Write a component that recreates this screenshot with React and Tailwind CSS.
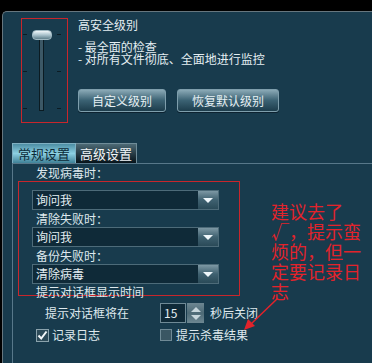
import React from 'react';

const font = { fontFamily: '"Noto Sans CJK SC", "Liberation Sans", sans-serif' };

const Dropdown = ({ value }) => (
  <div className="flex h-[20px] w-[187px] border border-[#4d6b79] bg-[#0f2a38]">
    <div className="flex-1 pl-[3px] text-[12px] leading-[18px] text-[#e4eef2]">{value}</div>
    <div className="flex w-[20px] items-center justify-center bg-gradient-to-b from-[#7d98a4] via-[#3f6170] to-[#2a4a58]">
      <div className="h-0 w-0 border-x-[5px] border-t-[5px] border-x-transparent border-t-[#eef6fa]"></div>
    </div>
  </div>
);

const GlassButton = ({ children, width }) => (
  <button className={`${width} h-[23px] rounded-[3px] border border-[#7e9eac] bg-gradient-to-b from-[#8aa9b6] via-[#3b6273] to-[#1d3d4c] text-[12px] leading-[20px] text-[#e6f0f4] shadow-[0_1px_0_#0c2230]`}>
    {children}
  </button>
);

export default function App() {
  return (
    <div className="h-[363px] w-[372px] overflow-hidden bg-black" style={font}>
      <div className="h-[11px]"></div>
      <div className="relative ml-[2px] h-[352px] rounded-tl-[5px] border-l border-t border-[#66767e] bg-[#183b4d]">
        {/* top: security level */}
        <div className="flex pl-[18px] pt-[6px]">
          <div className="relative h-[105px] w-[47px] border border-[#c8262c]">
            <div className="absolute left-[1px] top-[15px] h-px w-[4px] bg-[#0c1c24]"></div>
            <div className="absolute right-[6px] top-[15px] h-px w-[4px] bg-[#0c1c24]"></div>
            <div className="absolute left-[1px] top-[52px] h-px w-[4px] bg-[#0c1c24]"></div>
            <div className="absolute right-[6px] top-[52px] h-px w-[4px] bg-[#0c1c24]"></div>
            <div className="absolute left-[1px] top-[89px] h-px w-[4px] bg-[#0c1c24]"></div>
            <div className="absolute right-[6px] top-[89px] h-px w-[4px] bg-[#0c1c24]"></div>
            <div className="absolute left-[17px] top-[18px] h-[74px] w-[5px] border border-[#0b1b22] bg-[#3c5866]"></div>
            <div className="absolute left-[10px] top-[11px] h-[10px] w-[20px] rounded-[4px] border border-[#9fb8c2] bg-gradient-to-b from-[#f0f7fa] via-[#a9c2cc] to-[#5f7f8c]"></div>
          </div>
          <div className="ml-[10px] flex flex-col text-[12px] text-[#e4eef2]">
            <div className="mt-[-1px] leading-[16px]">高安全级别</div>
            <div className="mt-[8px] leading-[12px]">- 最全面的检查</div>
            <div className="leading-[12px]">- 对所有文件彻底、全面地进行监控</div>
            <div className="mt-[24px] flex gap-[11px]">
              <GlassButton width="w-[88px]">自定义级别</GlassButton>
              <GlassButton width="w-[102px]">恢复默认级别</GlassButton>
            </div>
          </div>
        </div>

        {/* tabs */}
        <div className="mt-[20px] flex pl-[9px]">
          <div className="h-[20px] w-[64px] border border-b-0 border-[#7fb0c2] bg-gradient-to-b from-[#4c8ea4] via-[#8cd0e2] to-[#3f8298] text-center text-[13px] leading-[19px] text-[#0b2a38]">常规设置</div>
          <div className="h-[20px] w-[61px] border-t border-r border-[#6f8c98] bg-gradient-to-b from-[#4d6a76] to-[#07141b] text-center text-[13px] leading-[19px] text-[#f2f6f8]">高级设置</div>
        </div>

        {/* general settings */}
        <div className="ml-[9px] h-[200px] border-l border-t border-[#58788a] pl-[5px]">
          <div className="ml-[18px] mt-[1px] text-[12px] leading-[16px] text-[#dfe9ee]">发现病毒时：</div>
          <div className="relative">
            <div className="w-[222px] border border-[#c8262c] pb-[2px] pl-[13px] pt-[8px]">
              <Dropdown value="询问我" />
              <div className="ml-[4px] mt-[1px] text-[12px] leading-[16px] text-[#dfe9ee]">清除失败时：</div>
              <Dropdown value="询问我" />
              <div className="ml-[4px] mt-[1px] text-[12px] leading-[16px] text-[#dfe9ee]">备份失败时：</div>
              <Dropdown value="清除病毒" />
              <div className="h-[9px]"></div>
            </div>
            <div className="absolute left-[18px] top-[103px] text-[12px] leading-[16px] text-[#dfe9ee]">提示对话框显示时间</div>
          </div>
          <div className="mt-[7px] flex items-center">
            <div className="ml-[27px] w-[115px] text-[12px] leading-[16px] text-[#dfe9ee]">提示对话框将在</div>
            <div className="h-[20px] w-[26px] border border-[#6f8a96] bg-[#0f2a38] pl-[3px] text-[12px] leading-[18px] text-[#e4eef2]">15</div>
            <div className="ml-[1px] flex h-[20px] w-[17px] flex-col items-center justify-center gap-[3px] bg-gradient-to-b from-[#6d8792] via-[#4d6a76] to-[#6d8792]">
              <div className="h-0 w-0 border-x-[5px] border-b-[5px] border-x-transparent border-b-[#c6d6dc]"></div>
              <div className="h-0 w-0 border-x-[5px] border-t-[5px] border-x-transparent border-t-[#c6d6dc]"></div>
            </div>
            <div className="ml-[6px] text-[12px] leading-[16px] text-[#dfe9ee]">秒后关闭</div>
          </div>
          <div className="mt-[4px] flex items-center">
            <div className="ml-[18px] flex h-[13px] w-[13px] items-center justify-center border border-[#8aa2ac] bg-[#2c4a58]">
              <svg width="11" height="11" viewBox="0 0 11 11">
                <path d="M1.5 5.5 L4.2 8.5 L9.5 1.5" stroke="#f4f8fa" strokeWidth="2" fill="none" />
              </svg>
            </div>
            <div className="ml-[3px] w-[108px] text-[12px] leading-[16px] text-[#dfe9ee]">记录日志</div>
            <div className="h-[12px] w-[12px] border border-[#6f8a96] bg-[#3a5663]"></div>
            <div className="ml-[4px] text-[12px] leading-[16px] text-[#dfe9ee]">提示杀毒结果</div>
          </div>
        </div>

        {/* annotation */}
        <div className="absolute left-[268px] top-[189px] text-[18px] leading-[20px] text-[#e2232b]">
          <div>建议去了</div>
          <div>√，提示蛮</div>
          <div>烦的，但一</div>
          <div>定要记录日</div>
          <div>志</div>
        </div>
        <svg className="absolute left-[236px] top-[284px]" width="50" height="40" viewBox="0 0 50 40">
          <line x1="39" y1="2" x2="12" y2="28" stroke="#e2232b" strokeWidth="1.5" />
          <polygon points="5,34 9,23 16,30" fill="#e2232b" />
        </svg>
      </div>
    </div>
  );
}
